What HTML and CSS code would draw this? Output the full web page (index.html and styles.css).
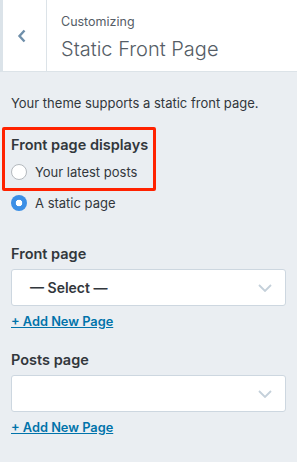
FILE: index.html
```html
<!DOCTYPE html>
<html>
<head>
    <title>Customizing Static Front Page</title>
    <link rel="stylesheet" href="styles.css">
</head>
<body>
    <div class="header">
        <div class="back">
            <svg width="10" height="14" viewBox="0 0 10 14">
                <path d="M7.5 1.5 L2.5 7 L7.5 12.5" fill="none" stroke="#6f8faa" stroke-width="2.4"/>
            </svg>
        </div>
        <div class="title">
            <div class="small">Customizing</div>
            <div class="big">Static Front Page</div>
        </div>
    </div>

    <div class="content">
        <p class="desc">Your theme supports a static front page.</p>

        <div class="highlight">
            <div class="label">Front page displays</div>
            <div class="radio-row">
                <span class="radio"></span>
                <span>Your latest posts</span>
            </div>
        </div>
        <div class="radio-row static">
            <span class="radio checked"></span>
            <span>A static page</span>
        </div>

        <div class="form-group first">
            <div class="label">Front page</div>
            <div class="select">
                <span>&mdash; Select &mdash;</span>
                <svg width="14" height="8" viewBox="0 0 14 8">
                    <path d="M1 1 L7 7 L13 1" fill="none" stroke="#c4d0da" stroke-width="1.8"/>
                </svg>
            </div>
            <a class="add-link" href="#">+ Add New Page</a>
        </div>

        <div class="form-group">
            <div class="label">Posts page</div>
            <div class="select">
                <span></span>
                <svg width="14" height="8" viewBox="0 0 14 8">
                    <path d="M1 1 L7 7 L13 1" fill="none" stroke="#c4d0da" stroke-width="1.8"/>
                </svg>
            </div>
            <a class="add-link" href="#">+ Add New Page</a>
        </div>
    </div>
</body>
</html>
```

FILE: styles.css
```css
body {
    margin: 0;
    background-color: #eaeef2;
    font-family: Inter, "Open Sans", sans-serif;
    color: #32373c;
}
.header {
    display: flex;
    height: 71px;
    background-color: #fff;
    border-left: 3px solid #dbe3e9;
    border-bottom: 1px solid #dce3e8;
}
.back {
    width: 44px;
    border-right: 1px solid #dce3e8;
    display: flex;
    align-items: center;
    justify-content: center;
    padding-right: 6px;
    box-sizing: border-box;
}
.title {
    padding: 14px 0 0 14px;
    color: #555d66;
}
.title .small {
    font-size: 12.5px;
    line-height: 16px;
}
.title .big {
    font-size: 20px;
    font-weight: 300;
    line-height: 26px;
    margin-top: 6px;
}
.content {
    padding: 0 11px;
}
.desc {
    font-size: 13px;
    margin: 23px 0 0 0;
    line-height: 17px;
}
.highlight {
    margin: 15px 0 0 -9px;
    padding: 6px 6px 7px 6px;
    width: 136px;
    border: 3px solid #ff2200;
    border-radius: 2px;
}
.label {
    font-size: 14.5px;
    font-weight: 600;
    line-height: 18px;
    white-space: nowrap;
}
.radio-row {
    display: flex;
    align-items: center;
    gap: 8px;
    font-size: 13px;
    margin-top: 9px;
    height: 18px;
}
.radio-row.static {
    margin-top: 3px;
}
.radio {
    width: 14px;
    height: 14px;
    border: 1px solid #b4b9be;
    border-radius: 50%;
    background: #fff;
    box-sizing: content-box;
}
.radio.checked {
    width: 16px;
    height: 16px;
    border: none;
    background: radial-gradient(circle, #fff 0, #fff 3px, #3b8fe6 3.6px);
}
.form-group {
    margin-top: 21px;
}
.form-group.first {
    margin-top: 33px;
}
.select {
    margin-top: 6px;
    height: 35px;
    background: #fff;
    border: 1px solid #cdd7e0;
    border-radius: 3px;
    display: flex;
    align-items: center;
    justify-content: space-between;
    padding: 0 13px 0 18px;
    font-size: 14px;
    font-weight: 600;
}
.add-link {
    display: block;
    width: fit-content;
    margin-top: 8px;
    line-height: 16px;
    color: #0073aa;
    font-size: 12.8px;
    font-weight: 600;
}
```
